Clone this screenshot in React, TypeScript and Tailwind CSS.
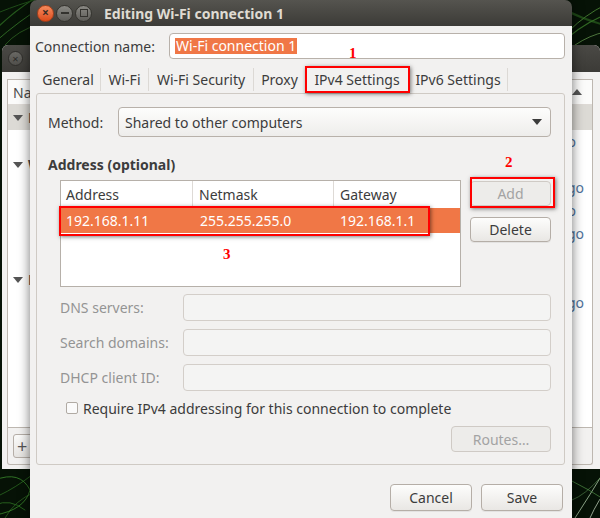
import React from "react";

function Desktop() {
  return (
    <svg className="absolute inset-0" width="600" height="518" viewBox="0 0 600 518">
      <rect width="600" height="518" fill="#061206" />
      <g fill="none" strokeLinecap="round">
        <path d="M-5 30 Q 15 10 40 -5" stroke="#2d6b22" strokeWidth="1.2" opacity="0.8" />
        <path d="M-5 42 Q 20 20 45 5" stroke="#3f8a2f" strokeWidth="1" opacity="0.7" />
        <path d="M0 12 Q 20 4 35 0" stroke="#1f4d18" strokeWidth="1" />
        <path d="M5 45 Q 18 30 38 25" stroke="#4a9a35" strokeWidth="0.8" opacity="0.6" />
        <path d="M560 45 Q 580 25 605 15" stroke="#3d7f2c" strokeWidth="1.2" opacity="0.8" />
        <path d="M570 30 Q 585 15 605 5" stroke="#5aa040" strokeWidth="1" opacity="0.7" />
        <path d="M575 45 Q 590 35 605 32" stroke="#7bb860" strokeWidth="1" opacity="0.6" />
        <path d="M565 10 Q 585 20 605 25" stroke="#2e6a22" strokeWidth="2" opacity="0.6" />
        <path d="M-5 480 Q 20 470 30 490 Q 25 510 -5 515" stroke="#3a8a2c" strokeWidth="1" opacity="0.8" />
        <path d="M0 495 Q 15 488 32 475" stroke="#2f7424" strokeWidth="1" opacity="0.7" />
        <path d="M5 518 Q 15 500 35 492" stroke="#4a9a35" strokeWidth="0.8" opacity="0.6" />
        <path d="M-5 505 Q 10 498 25 510" stroke="#255e1c" strokeWidth="1" />
        <path d="M575 518 Q 590 495 605 470" stroke="#a9c4a2" strokeWidth="1" opacity="0.8" />
        <path d="M590 518 Q 598 500 610 485" stroke="#cfe0c8" strokeWidth="1" opacity="0.7" />
        <path d="M570 480 Q 590 490 605 500" stroke="#4f8f45" strokeWidth="1" opacity="0.7" />
        <path d="M572 500 Q 585 495 600 478" stroke="#6ea864" strokeWidth="0.8" opacity="0.6" />
      </g>
    </svg>
  );
}

type Row = { group?: string; tail?: string; mr?: string; gray?: boolean; h: string };

const rows: Row[] = [
  { group: "E", gray: true, h: "h-[25px]" },
  { tail: "o", mr: "mr-[16px]", h: "h-[23px]" },
  { group: "W", h: "h-[23px]" },
  { tail: "go", mr: "mr-[8px]", h: "h-[23px]" },
  { tail: "o", mr: "mr-[16px]", h: "h-[23px]" },
  { tail: "go", mr: "mr-[8px]", h: "h-[23px]" },
  { h: "h-[23px]" },
  { group: "E", h: "h-[23px]" },
  { tail: "go", mr: "mr-[8px]", h: "h-[23px]" },
];

function BackgroundWindow() {
  return (
    <div className="absolute left-[2px] top-[45px] w-[598px] h-[424px] flex flex-col rounded-t-[6px] overflow-hidden bg-[#f2f1f0]">
      <div className="h-[27px] shrink-0 bg-gradient-to-b from-[#4a4945] to-[#3c3b37] flex items-center">
        <div className="ml-[6px] w-[15px] h-[15px] rounded-full bg-gradient-to-b from-[#6a6965] to-[#504f4b] border border-[#2f2e2b] flex items-center justify-center text-[#2c2b28] text-[11px] leading-none">
          ×
        </div>
      </div>
      <div className="ml-[5px] mt-[7px] w-[586px] h-[349px] border border-[#bdb7b0] bg-white flex flex-col">
        <div className="h-[25px] shrink-0 flex items-center justify-between border-b border-[#dedad6] bg-[#fbfbfa]">
          <span className="ml-[5px] text-[#4c4c4c]">Na</span>
          <svg width="10" height="6" viewBox="0 0 10 6" className="mr-[10px]">
            <polygon points="0,6 5,0 10,6" fill="#555" />
          </svg>
        </div>
        {rows.map((r, i) => (
          <div
            key={i}
            className={`${r.h} shrink-0 flex items-center justify-between ${r.gray ? "bg-[#dcdad5]" : ""}`}
          >
            {r.group ? (
              <span className="flex items-center ml-[5px] gap-[5px] font-bold text-[#4c4c4c]">
                <svg width="10" height="6" viewBox="0 0 10 6">
                  <polygon points="0,0 10,0 5,6" fill="#555" />
                </svg>
                {r.group}
              </span>
            ) : (
              <span />
            )}
            {r.tail ? <span className={`${r.mr} text-[#4f739b]`}>{r.tail}</span> : null}
          </div>
        ))}
      </div>
      <div className="ml-[5px] w-[586px] h-[37px] border border-t-0 border-[#bdb7b0] rounded-b-[3px] flex items-center">
        <div className="ml-[5px] w-[40px] h-[24px] rounded-[3px] border border-[#b5aea7] bg-gradient-to-b from-[#fbfbfa] to-[#e6e4e1] flex items-center justify-start pl-[3px] text-[18px] text-[#555] leading-none">
          +
        </div>
      </div>
    </div>
  );
}

function CircleBtn({ kind }: { kind: "close" | "min" | "max" }) {
  if (kind === "close") {
    return (
      <div className="w-[17px] h-[17px] rounded-full bg-gradient-to-b from-[#f58a5c] to-[#dc4a17] border border-[#a9401a] flex items-center justify-center text-[#3c2c25] text-[12px] leading-none font-bold">
        ×
      </div>
    );
  }
  return (
    <div className="w-[17px] h-[17px] rounded-full bg-gradient-to-b from-[#8a8984] to-[#5d5c58] border border-[#35342f] flex items-center justify-center">
      {kind === "min" ? (
        <div className="w-[8px] h-[2px] bg-[#33322e]" />
      ) : (
        <div className="w-[8px] h-[8px] border-[1.5px] border-[#33322e]" />
      )}
    </div>
  );
}

function Button({ children, disabled, className = "" }: { children: React.ReactNode; disabled?: boolean; className?: string }) {
  return (
    <div
      className={`flex items-center justify-center rounded-[4px] border ${
        disabled
          ? "border-[#cfcac5] bg-[#edecea] text-[#a3a3a3]"
          : "border-[#b5aea7] bg-gradient-to-b from-[#fdfdfc] to-[#e9e7e4] text-[#3c3c3c] shadow-[0_1px_0_rgba(0,0,0,0.06)]"
      } ${className}`}
    >
      {children}
    </div>
  );
}

const tabs = [
  { t: "General", w: "w-[65px]" },
  { t: "Wi-Fi", w: "w-[48px]" },
  { t: "Wi-Fi Security", w: "w-[105px]" },
  { t: "Proxy", w: "w-[52px]" },
  { t: "IPv4 Settings", w: "w-[103px]" },
  { t: "IPv6 Settings", w: "w-[99px]" },
];

function Dialog() {
  return (
    <div className="absolute left-[30px] top-0 w-[542px] h-[530px] flex flex-col rounded-t-[7px] overflow-hidden shadow-[0_0_12px_rgba(0,0,0,0.55)]">
      <div className="h-[26px] shrink-0 bg-gradient-to-b from-[#55544f] to-[#3c3b37] flex items-center">
        <div className="ml-[7px] flex gap-[2px]">
          <CircleBtn kind="close" />
          <CircleBtn kind="min" />
          <CircleBtn kind="max" />
        </div>
        <span className="ml-[12px] font-bold text-[#dfdbd2] text-[14px]">Editing Wi-Fi connection 1</span>
      </div>
      <div className="flex-1 bg-[#f2f1f0] flex flex-col pt-[7px] pl-[5px] pr-[7px]">
        <div className="flex items-center h-[26px]">
          <span className="w-[134px]">Connection name:</span>
          <div className="w-[396px] h-[26px] border border-[#b8b1aa] rounded-[4px] bg-white flex items-center pl-[5px]">
            <span className="bg-[#f07746] text-white leading-[16px] px-[1px]">Wi-Fi connection 1</span>
          </div>
        </div>
        <div className="mt-[7px] ml-[1px] h-[27px] flex">
          {tabs.map((t) => (
            <div key={t.t} className={`${t.w} h-full flex items-center justify-center`}>
              <div className="flex-1 text-center">{t.t}</div>
              <div className="w-px h-[23px] bg-[#dcd9d5]" />
            </div>
          ))}
        </div>
        <div className="ml-[1px] w-[529px] h-[372px] border border-[#cfcac4] rounded-[3px] flex flex-col pl-[11px] pr-[13px] pt-[13px]">
          <div className="flex items-center h-[30px]">
            <span className="w-[70px]">Method:</span>
            <div className="flex-1 h-[30px] border border-[#b8b1aa] rounded-[4px] bg-gradient-to-b from-[#fdfdfc] to-[#eeedeb] flex items-center justify-between pl-[6px] pr-[8px]">
              <span>Shared to other computers</span>
              <svg width="10" height="6" viewBox="0 0 10 6">
                <polygon points="0,0 10,0 5,6" fill="#3c3c3c" />
              </svg>
            </div>
          </div>
          <div className="mt-[18px] leading-[20px] font-bold">Address (optional)</div>
          <div className="mt-[5px] ml-[12px] flex">
            <div className="w-[402px] h-[107px] border border-[#b6b0a9] bg-white flex flex-col">
              <div className="h-[27px] flex items-center">
                <div className="w-[132px] h-full flex items-center pl-[5px] border-r border-[#dedad6]">Address</div>
                <div className="w-[141px] h-full flex items-center pl-[6px] border-r border-[#dedad6]">Netmask</div>
                <div className="flex-1 h-full flex items-center pl-[6px]">Gateway</div>
              </div>
              <div className="h-[25px] bg-[#f07746] text-white flex items-center">
                <div className="w-[132px] pl-[5px]">192.168.1.11</div>
                <div className="w-[141px] pl-[7px]">255.255.255.0</div>
                <div className="flex-1 pl-[6px]">192.168.1.1</div>
              </div>
            </div>
            <div className="ml-[9px] flex flex-col">
              <Button disabled className="w-[81px] h-[25px] mt-[1px]">Add</Button>
              <Button className="w-[81px] h-[25px] mt-[11px]">Delete</Button>
            </div>
          </div>
          <div className="mt-[7px] ml-[12px] flex flex-col gap-[8px]">
            {["DNS servers:", "Search domains:", "DHCP client ID:"].map((l) => (
              <div key={l} className="flex items-center h-[27px]">
                <span className="w-[123px] text-[#949494]">{l}</span>
                <div className="flex-1 h-[27px] border border-[#d3cec9] rounded-[4px] bg-[#f4f4f3]" />
              </div>
            ))}
          </div>
          <div className="mt-[7px] h-[20px] flex items-center ml-[18px]">
            <div className="w-[12px] h-[12px] border border-[#b0aaa3] rounded-[2px] bg-[#fafafa]" />
            <span className="ml-[5px]">Require IPv4 addressing for this connection to complete</span>
          </div>
          <Button disabled className="mt-[8px] self-end w-[100px] h-[26px]">Routes…</Button>
        </div>
        <div className="mt-[19px] flex justify-end gap-[9px] pr-[2px]">
          <Button className="w-[82px] h-[27px]">Cancel</Button>
          <Button className="w-[82px] h-[27px]">Save</Button>
        </div>
      </div>
    </div>
  );
}

function Annotations() {
  const box = "absolute border-2 border-[#ff0000] shadow-[1px_1px_4px_rgba(0,0,0,0.5)]";
  const num = "absolute text-[#ff0000] font-bold text-[15px] leading-none font-['Liberation_Serif',serif]";
  return (
    <>
      <div className={`${box} left-[305px] top-[66px] w-[105px] h-[27px]`} />
      <div className={`${num} left-[349px] top-[46px]`}>1</div>
      <div className={`${box} left-[470px] top-[177px] w-[85px] h-[31px]`} />
      <div className={`${num} left-[505px] top-[155px]`}>2</div>
      <div className={`${box} left-[59px] top-[206px] w-[371px] h-[30px]`} />
      <div className={`${num} left-[223px] top-[247px]`}>3</div>
    </>
  );
}

export default function App() {
  return (
    <div className="relative w-[600px] h-[518px] overflow-hidden font-['Noto_Sans',sans-serif] text-[14px] text-[#3c3c3c]">
      <Desktop />
      <BackgroundWindow />
      <Dialog />
      <Annotations />
    </div>
  );
}
